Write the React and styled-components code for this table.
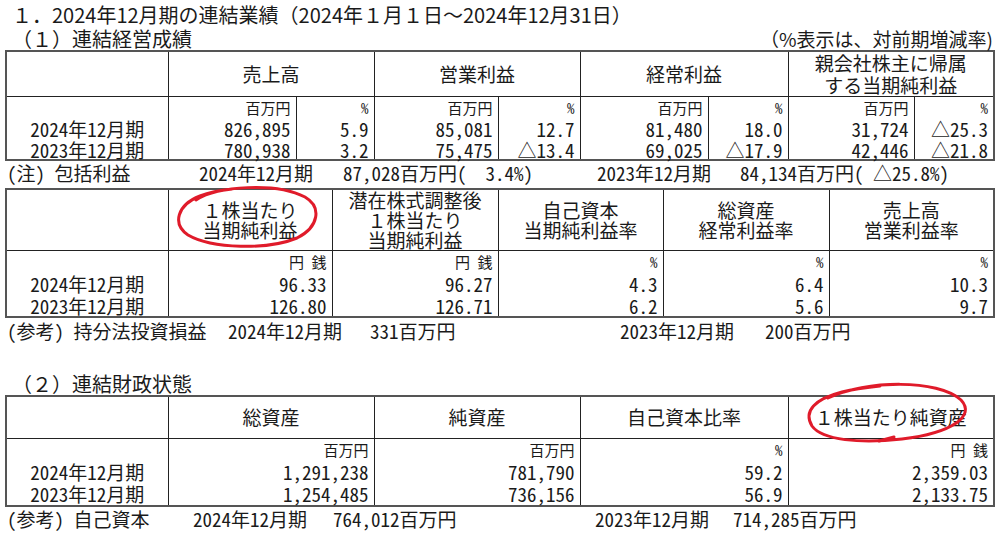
import styled, { createGlobalStyle } from 'styled-components';

const GlobalStyle = createGlobalStyle`
  html, body {
    margin: 0;
    padding: 0;
    background: #fff;
  }
  body {
    font-family: "Noto Sans CJK JP", "Noto Sans", sans-serif;
    color: #1a1a1a;
  }
`;

const Page = styled.div`
  position: relative;
  width: 1000px;
  height: 533px;
  box-sizing: border-box;
  padding: 3px 7px 0 5px;
  overflow: hidden;
`;

// half-width forms for ASCII (MS Gothic style fixed-pitch digits)
const half = `font-feature-settings: 'hwid' 1;`;

const Heading = styled.div`
  font-size: 20px;
  line-height: ${(p) => p.$lh || 24}px;
  padding-left: 7px;
  white-space: pre;
  margin-top: ${(p) => p.$mt || 0}px;
`;

const SubHeadRow = styled.div`
  display: flex;
  justify-content: space-between;
  align-items: center;
`;

const Aside = styled.span`
  font-size: 19px;
  line-height: 23px;
  white-space: nowrap;
`;

const Table = styled.table`
  width: 988px;
  border-collapse: collapse;
  table-layout: fixed;
  border: 2px solid #555;
  font-size: 19px;
  margin-top: ${(p) => p.$mt || 0}px;
`;

const Th = styled.th`
  font-weight: normal;
  border: 1px solid #222;
  text-align: center;
  vertical-align: middle;
  height: ${(p) => p.$h}px;
  line-height: ${(p) => p.$lh}px;
  padding: 0;
  box-sizing: border-box;
  white-space: pre-line;
`;

const Td = styled.td`
  ${half}
  border-left: 1px solid #222;
  border-right: 1px solid #222;
  padding: 0 5px 0 0;
  height: ${(p) => p.$lh}px;
  box-sizing: border-box;
  text-align: ${(p) => (p.$center ? 'center' : 'right')};
  line-height: ${(p) => p.$lh}px;
  vertical-align: top;
  white-space: pre;
`;

const Unit = styled.span`
  display: inline-block;
  font-size: 15px;
  line-height: ${(p) => p.$lh}px;
  vertical-align: top;
`;

const NoteLine = styled.div`
  ${half}
  display: flex;
  font-size: 19px;
  line-height: 24px;
  padding-left: 2px;
  margin-top: ${(p) => p.$mt || 0}px;
  white-space: pre;
`;

const Seg = styled.span`
  flex: 0 0 ${(p) => (p.$w ? `${p.$w}px` : 'auto')};
`;

const Marks = styled.svg`
  position: absolute;
  left: 0;
  top: 0;
  pointer-events: none;
`;

function DataTable({ cols, head, headH, headLh, units, rows, rowH, mt }) {
  return (
    <Table $mt={mt}>
      <colgroup>
        {cols.map((w, i) => (
          <col key={i} style={{ width: w }} />
        ))}
      </colgroup>
      <tbody>
        <tr>
          <Th $h={headH} $lh={headLh} />
          {head.map((h, i) => (
            <Th key={i} colSpan={h.span || 1} $h={headH} $lh={headLh}>
              {h.t}
            </Th>
          ))}
        </tr>
        <tr>
          <Td $center $lh={rowH[0]} />
          {units.map((u, i) => (
            <Td key={i} $lh={rowH[0]}>
              <Unit $lh={rowH[0]}>{u}</Unit>
            </Td>
          ))}
        </tr>
        {rows.map((r, ri) => (
          <tr key={ri}>
            <Td $center $lh={rowH[ri + 1]} style={{ paddingRight: 0 }}>
              {r.label}
            </Td>
            {r.vals.map((v, i) => (
              <Td key={i} $lh={rowH[ri + 1]}>
                {v}
              </Td>
            ))}
          </tr>
        ))}
      </tbody>
    </Table>
  );
}

function Note({ segs, mt }) {
  return (
    <NoteLine $mt={mt}>
      {segs.map(([t, w], i) => (
        <Seg key={i} $w={w}>
          {t}
        </Seg>
      ))}
    </NoteLine>
  );
}

export default function App() {
  return (
    <>
      <GlobalStyle />
      <Page>
        <Heading>１．2024年12月期の連結業績（2024年１月１日～2024年12月31日）</Heading>
        <SubHeadRow>
          <Heading $lh={23}>（１）連結経営成績</Heading>
          <Aside>（%表示は、対前期増減率)</Aside>
        </SubHeadRow>

        <DataTable
          cols={[162, 128, 78, 124, 82, 128, 80, 126, 80]}
          headH={43}
          headLh={22}
          head={[
            { t: '売上高', span: 2 },
            { t: '営業利益', span: 2 },
            { t: '経常利益', span: 2 },
            { t: '親会社株主に帰属\nする当期純利益', span: 2 },
          ]}
          units={['百万円', '%', '百万円', '%', '百万円', '%', '百万円', '%']}
          rows={[
            { label: '2024年12月期', vals: ['826,895', '5.9', '85,081', '12.7', '81,480', '18.0', '31,724', '△25.3'] },
            { label: '2023年12月期', vals: ['780,938', '3.2', '75,475', '△13.4', '69,025', '△17.9', '42,446', '△21.8'] },
          ]}
          rowH={[21, 22, 19]}
        />
        <Note
          segs={[
            ['(注) 包括利益', 192],
            ['2024年12月期', 144],
            ['87,028百万円(  3.4%)', 254],
            ['2023年12月期', 143],
            ['84,134百万円( △25.8%)'],
          ]}
        />

        <DataTable
          mt={3}
          cols={[162, 164, 166, 165, 166, 165]}
          headH={60}
          headLh={20}
          head={[
            { t: '１株当たり\n当期純利益' },
            { t: '潜在株式調整後\n１株当たり\n当期純利益' },
            { t: '自己資本\n当期純利益率' },
            { t: '総資産\n経常利益率' },
            { t: '売上高\n営業利益率' },
          ]}
          units={['円　銭', '円　銭', '%', '%', '%']}
          rows={[
            { label: '2024年12月期', vals: ['96.33', '96.27', '4.3', '6.4', '10.3'] },
            { label: '2023年12月期', vals: ['126.80', '126.71', '6.2', '5.6', '9.7'] },
          ]}
          rowH={[22, 22, 21]}
        />
        <Note
          mt={1}
          segs={[
            ['(参考) 持分法投資損益', 221],
            ['2024年12月期', 142],
            ['331百万円', 250],
            ['2023年12月期', 145],
            ['200百万円'],
          ]}
        />

        <Heading $lh={22} $mt={30}>（２）連結財政状態</Heading>
        <DataTable
          cols={[162, 206, 206, 208, 206]}
          headH={42}
          headLh={22}
          head={[{ t: '総資産' }, { t: '純資産' }, { t: '自己資本比率' }, { t: '１株当たり純資産' }]}
          units={['百万円', '百万円', '%', '円　銭']}
          rows={[
            { label: '2024年12月期', vals: ['1,291,238', '781,790', '59.2', '2,359.03'] },
            { label: '2023年12月期', vals: ['1,254,485', '736,156', '56.9', '2,133.75'] },
          ]}
          rowH={[22, 22, 22]}
        />
        <Note
          segs={[
            ['(参考) 自己資本', 186],
            ['2024年12月期', 140],
            ['764,012百万円', 262],
            ['2023年12月期', 138],
            ['714,285百万円'],
          ]}
        />

        <Marks width="1000" height="533" viewBox="0 0 1000 533">
          <g fill="none" stroke="#e01b2a" strokeWidth="3" strokeLinecap="round" strokeLinejoin="round">
            <path d="M196 200 C218 186, 276 182, 305 197 C322 207, 319 227, 297 238 C268 250, 212 249, 188 235 C172 224, 177 205, 200 196 C210 192, 222 190, 232 189" />
            <path d="M828 398 C866 380, 938 379, 961 400 C976 416, 952 433, 902 439 C860 444, 822 440, 812 426 C803 411, 815 399, 842 392 C858 388, 870 387, 880 386" />
            <path d="M879 441 L894 437" />
          </g>
        </Marks>
      </Page>
    </>
  );
}
